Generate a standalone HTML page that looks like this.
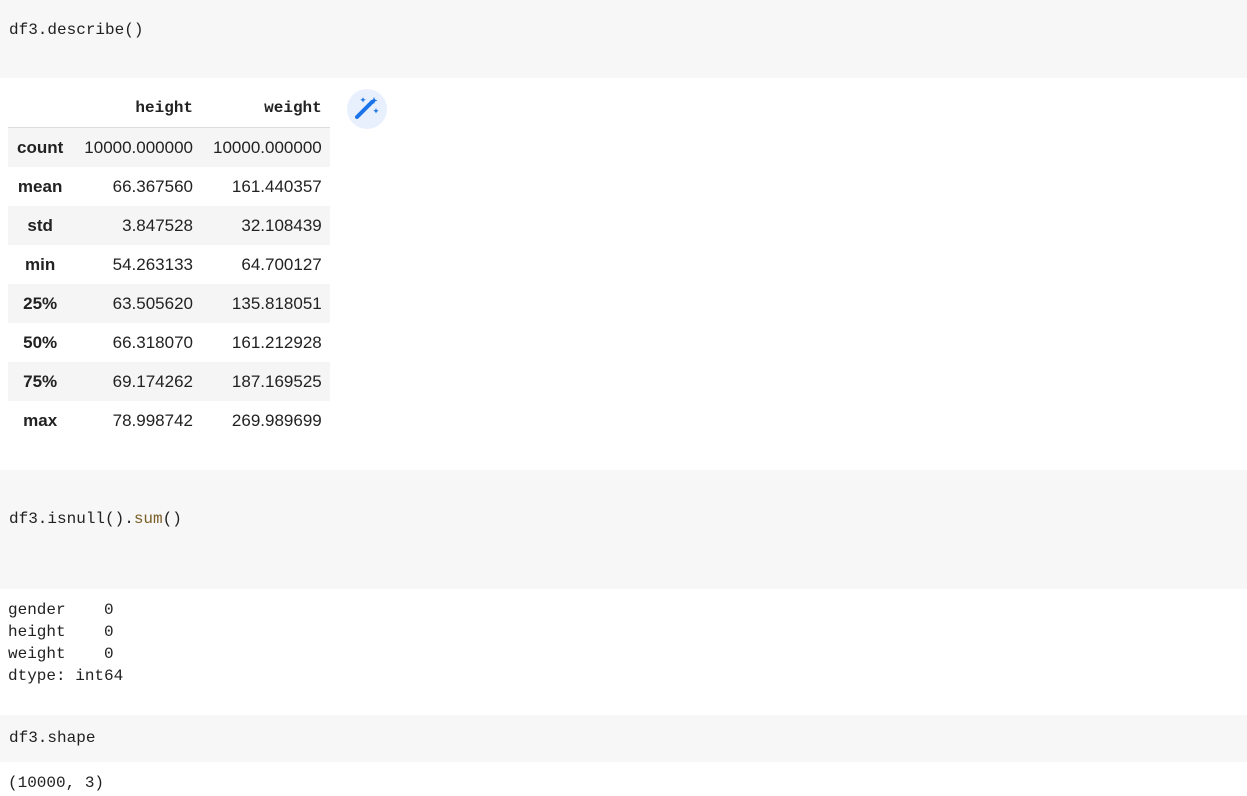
<!DOCTYPE html>
<html><head><style>
body{margin:0;width:1247px;height:796px;background:#fff;position:relative;overflow:hidden;font-family:"Liberation Sans",Arial,sans-serif;}
.code{position:absolute;left:0;width:1247px;background:#f7f7f7;font-family:"Liberation Mono",monospace;font-size:16px;color:#212121;}
.code span{position:absolute;left:9px;}
.out{position:absolute;left:8px;font-family:"Liberation Mono",monospace;font-size:16px;line-height:22px;white-space:pre;color:#212121;}
table{position:absolute;left:8px;top:89px;border-collapse:collapse;font-size:17px;color:#222;}
th,td{height:39px;padding:0 8px 0 12px;text-align:right;}
thead th{font-family:"Liberation Mono",monospace;font-weight:bold;font-size:16px;border-bottom:1px solid #ddd;height:38px;}
tbody th{text-align:center;font-weight:bold;padding:0 9px;}
tbody tr:nth-child(odd){background:#f5f5f5;}
.wand{position:absolute;left:347px;top:89px;width:40px;height:40px;border-radius:50%;background:#e8f0fe;}
</style></head><body>
<div class="code" style="top:0;height:78px"><span style="top:21px">df3.describe()</span></div>
<table>
<thead><tr><th></th><th>height</th><th>weight</th></tr></thead>
<tbody>
<tr><th>count</th><td>10000.000000</td><td>10000.000000</td></tr>
<tr><th>mean</th><td>66.367560</td><td>161.440357</td></tr>
<tr><th>std</th><td>3.847528</td><td>32.108439</td></tr>
<tr><th>min</th><td>54.263133</td><td>64.700127</td></tr>
<tr><th>25%</th><td>63.505620</td><td>135.818051</td></tr>
<tr><th>50%</th><td>66.318070</td><td>161.212928</td></tr>
<tr><th>75%</th><td>69.174262</td><td>187.169525</td></tr>
<tr><th>max</th><td>78.998742</td><td>269.989699</td></tr>
</tbody></table>
<div class="wand"><svg width="40" height="40" viewBox="0 0 40 40">
<path d="M10 28 L22 16" stroke="#1a73e8" stroke-width="4" stroke-linecap="round"/>
<path d="M22 16 L25 13" stroke="#1a73e8" stroke-width="4" stroke-linecap="round"/>
<path d="M27 8 l1 2.5 2.5 1 -2.5 1 -1 2.5 -1 -2.5 -2.5 -1 2.5 -1z" fill="#1a73e8"/>
<path d="M16 8 l0.8 2 2 0.8 -2 0.8 -0.8 2 -0.8 -2 -2 -0.8 2 -0.8z" fill="#1a73e8"/>
<path d="M29 19 l0.8 2 2 0.8 -2 0.8 -0.8 2 -0.8 -2 -2 -0.8 2 -0.8z" fill="#1a73e8"/>
</svg></div>
<div class="code" style="top:470px;height:119px"><span style="top:40px">df3.isnull().<span style="position:static;color:#795e26">sum</span>()</span></div>
<div class="out" style="top:599px">gender    0
height    0
weight    0
dtype: int64</div>
<div class="code" style="top:715px;height:47px"><span style="top:14px">df3.shape</span></div>
<div class="out" style="top:772px">(10000, 3)</div>
</body></html>
